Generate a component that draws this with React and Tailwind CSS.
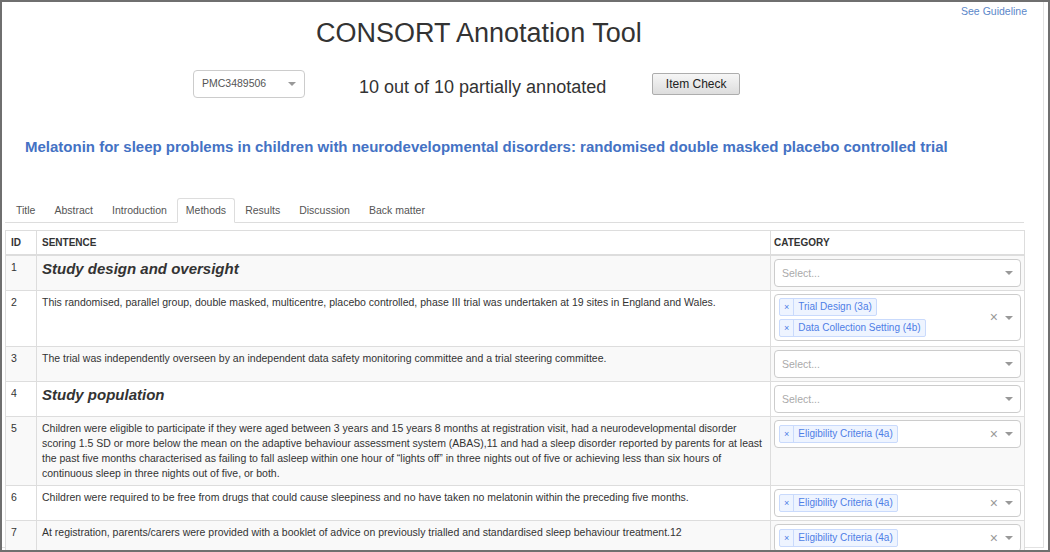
import React from "react";

const rows = [
  { id: 1, heading: true, text: "Study design and oversight", tags: [] },
  {
    id: 2,
    text: "This randomised, parallel group, double masked, multicentre, placebo controlled, phase III trial was undertaken at 19 sites in England and Wales.",
    tags: ["Trial Design (3a)", "Data Collection Setting (4b)"],
  },
  {
    id: 3,
    text: "The trial was independently overseen by an independent data safety monitoring committee and a trial steering committee.",
    tags: [],
  },
  { id: 4, heading: true, text: "Study population", tags: [] },
  {
    id: 5,
    text: "Children were eligible to participate if they were aged between 3 years and 15 years 8 months at registration visit, had a neurodevelopmental disorder scoring 1.5 SD or more below the mean on the adaptive behaviour assessment system (ABAS),11 and had a sleep disorder reported by parents for at least the past five months characterised as failing to fall asleep within one hour of \u201clights off\u201d in three nights out of five or achieving less than six hours of continuous sleep in three nights out of five, or both.",
    tags: ["Eligibility Criteria (4a)"],
  },
  {
    id: 6,
    text: "Children were required to be free from drugs that could cause sleepiness and no have taken no melatonin within the preceding five months.",
    tags: ["Eligibility Criteria (4a)"],
  },
  {
    id: 7,
    text: "At registration, parents/carers were provided with a booklet of advice on previously trialled and standardised sleep behaviour treatment.12",
    tags: ["Eligibility Criteria (4a)"],
  },
];

const tabs = ["Title", "Abstract", "Introduction", "Methods", "Results", "Discussion", "Back matter"];

const Arrow = () => (
  <span className="w-0 h-0 border-l-[4px] border-r-[4px] border-t-[4px] border-l-transparent border-r-transparent border-t-[#999]"></span>
);

const Tag = ({ label }) => (
  <div className="flex items-stretch h-[18px] border border-[#c9dafc] bg-[#eef4ff] rounded-[2px] text-[10px] text-[#4f7ee6] leading-[16px]">
    <span className="px-[4px] border-r border-[#c9dafc] text-[9px]">×</span>
    <span className="px-[4px]">{label}</span>
  </div>
);

const CategorySelect = ({ tags }) => {
  if (tags.length === 0) {
    return (
      <div className="h-[28px] border border-[#ccc] rounded-[4px] bg-white flex items-center pl-[7px] pr-[7px]">
        <span className="text-[10.5px] text-[#aaa] flex-1">Select...</span>
        <Arrow />
      </div>
    );
  }
  return (
    <div className="min-h-[28px] border border-[#ccc] rounded-[4px] bg-white flex items-center pl-[4px] pr-[7px] py-[3px]">
      <div className="flex-1 flex flex-wrap gap-x-[4px] gap-y-[3px] pr-[30px]">
        {tags.map((t) => (
          <Tag key={t} label={t} />
        ))}
      </div>
      <span className="text-[14px] leading-none text-[#999] mr-[7px] mb-[1px]">×</span>
      <Arrow />
    </div>
  );
};

export default function App() {
  return (
    <div className="w-[1050px] h-[552px] overflow-hidden border-2 border-[#6f6f6f] bg-white font-['Liberation_Sans',Arial,sans-serif] text-[#333]">
      <div className="w-[1042px] h-[546px] border-r border-b border-[#e2e2e2]">
        <div className="flex items-start">
          <h1 className="pl-[314px] pt-[16px] text-[27px] leading-[30px] font-normal text-[#333]">
            CONSORT Annotation Tool
          </h1>
          <a className="ml-auto mr-[16px] pt-[2px] text-[10.5px] leading-[15px] text-[#5b87c9]">See Guideline</a>
        </div>

        <div className="flex items-start mt-[22px]">
          <div className="ml-[191px] w-[112px] h-[28px] border border-[#ccc] rounded-[4px] flex items-center pl-[8px] pr-[8px]">
            <span className="flex-1 text-[10.5px] text-[#555]">PMC3489506</span>
            <Arrow />
          </div>
          <div className="ml-[54px] mt-[5px] text-[18px] leading-[24px] text-[#333]">10 out of 10 partially annotated</div>
          <button className="ml-[46px] mt-[3px] w-[88px] h-[22px] border border-[#adadad] rounded-[2px] bg-gradient-to-b from-[#f6f6f6] to-[#dddddd] text-[12px] text-[#222]">
            Item Check
          </button>
        </div>

        <h2 className="pl-[23px] mt-[37px] text-[15px] leading-[21px] font-bold text-[#4472c4]">
          Melatonin for sleep problems in children with neurodevelopmental disorders: randomised double masked placebo controlled trial
        </h2>

        <div className="ml-[3px] w-[1019px] mt-[41px]">
          <ul className="flex border-b border-[#ddd] pl-[2px]">
            {tabs.map((t) => (
              <li
                key={t}
                className={
                  t === "Methods"
                    ? "-mb-px mr-[1px] px-[8px] py-[4px] border border-[#ddd] border-b-white bg-white rounded-t-[3px] text-[10.5px] leading-[15px] text-[#555]"
                    : "-mb-px mr-[1px] px-[8px] py-[4px] border border-transparent text-[10.5px] leading-[15px] text-[#555]"
                }
              >
                {t}
              </li>
            ))}
          </ul>

          <table className="mt-[7px] w-full table-fixed border-collapse text-[10.5px] leading-[15px]">
            <colgroup>
              <col className="w-[31px]" />
              <col className="w-[734px]" />
              <col className="w-[254px]" />
            </colgroup>
            <thead>
              <tr className="border-b-2 border-[#ddd]">
                <th className="border border-[#ddd] border-b-2 px-[5px] py-[4px] text-left text-[10px] font-bold">ID</th>
                <th className="border border-[#ddd] border-b-2 px-[5px] py-[4px] text-left text-[10px] font-bold">SENTENCE</th>
                <th className="border border-[#ddd] border-b-2 px-[3px] py-[4px] text-left text-[10px] font-bold">CATEGORY</th>
              </tr>
            </thead>
            <tbody>
              {rows.map((r, i) => (
                <tr key={r.id} className={i % 2 === 0 ? "bg-[#f9f9f9]" : "bg-white"}>
                  <td className="border border-[#ddd] px-[5px] py-[4px] align-top">{r.id}</td>
                  <td className={r.id === 2 ? "border border-[#ddd] px-[5px] pt-[4px] pb-[6px] align-top" : "border border-[#ddd] px-[5px] py-[4px] align-top"}>
                    {r.heading ? (
                      <div className="text-[15px] leading-[18px] font-bold italic">{r.text}</div>
                    ) : (
                      r.text
                    )}
                  </td>
                  <td className={r.id === 2 ? "border border-[#ddd] px-[3px] pt-[3px] pb-[5px] align-top" : "border border-[#ddd] px-[3px] py-[3px] align-top"}>
                    <CategorySelect tags={r.tags} />
                  </td>
                </tr>
              ))}
            </tbody>
          </table>
        </div>
      </div>
    </div>
  );
}
